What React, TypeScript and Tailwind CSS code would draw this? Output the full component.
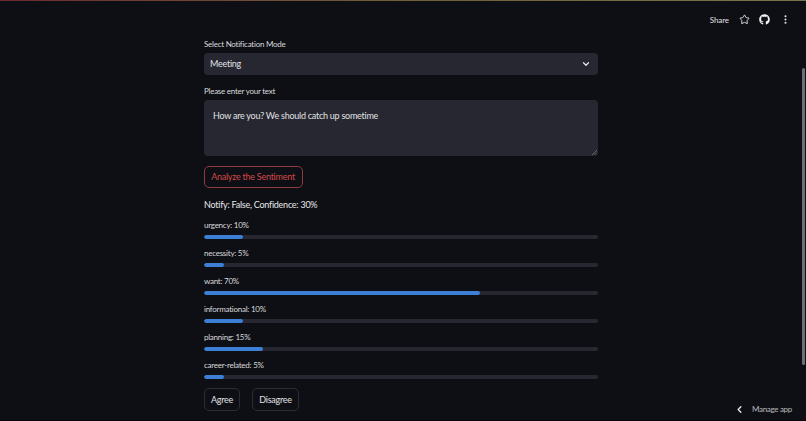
import { ChevronDown, ChevronLeft, EllipsisVertical, Star } from 'lucide-react';
import { FaGithub } from 'react-icons/fa';

const scores = [
  { label: 'urgency', value: 10 },
  { label: 'necessity', value: 5 },
  { label: 'want', value: 70 },
  { label: 'informational', value: 10 },
  { label: 'planning', value: 15 },
  { label: 'career-related', value: 5 },
];

const App = () => {
  return (
    <div className="relative h-[421px] w-[806px] overflow-hidden bg-[#0e0f14] font-['Lato',sans-serif] text-[#e6e7ea]">
      <div className="h-px bg-gradient-to-r from-[#6b2a30] via-[#6e5f3a] to-[#77744a]"></div>

      {/* Toolbar */}
      <div className="flex h-[36px] items-center justify-end pr-[15px] pt-[1px]">
        <span className="mr-[10px] text-[8px] font-medium tracking-[-0.1px] text-[#d8d9dc]">Share</span>
        <Star size={11} strokeWidth={2} className="mr-[9px] text-[#e6e7ea]" />
        <FaGithub size={11} className="mr-[10px] text-[#f0f0f2]" />
        <EllipsisVertical size={11} strokeWidth={2.5} className="text-[#e6e7ea]" />
      </div>

      <main className="ml-[204px] flex w-[394px] flex-col">
        <label className="h-[16px] text-[8px] leading-[14px] tracking-[-0.25px] text-[#d8d9dc]">Select Notification Mode</label>
        <div className="flex h-[22px] items-center justify-between rounded-[4px] bg-[#262730] pl-[6px] pr-[7px] text-[9px] tracking-[-0.25px] text-[#e0e1e4]">
          <span>Meeting</span>
          <ChevronDown size={10} strokeWidth={3} className="text-[#e6e7ea]" />
        </div>

        <label className="mt-[9px] h-[16px] text-[8px] leading-[14px] tracking-[-0.25px] text-[#d8d9dc]">Please enter your text</label>
        <div className="relative h-[56px] rounded-[4px] bg-[#262730] px-[9px] pt-[10px] text-[9px] leading-[12px] tracking-[-0.25px] text-[#e0e1e4]">
          How are you? We should catch up sometime
          <svg viewBox="0 0 6 6" className="absolute bottom-[1px] right-[1px] h-[5px] w-[5px] text-[#777]">
            <path d="M0 6 6 0M3 6 6 3" stroke="currentColor" strokeWidth="0.9" />
          </svg>
        </div>

        <button className="mt-[10px] h-[22px] w-[99px] rounded-[5px] border border-[#8e3a40] pr-[1px] text-[9px] tracking-[-0.25px] text-[#d1484a]">
          Analyze the Sentiment
        </button>

        <p className="mt-[10px] text-[9px] leading-[13px] tracking-[-0.25px] text-[#e6e7ea]">Notify: False, Confidence: 30%</p>

        <div className="mt-[10px] flex flex-col gap-[10px]">
          {scores.map((s) => (
            <div key={s.label} className="flex h-[18px] flex-col">
              <span className="h-[13.5px] text-[8px] leading-[9px] tracking-[-0.25px] text-[#d8d9dc]">
                {s.label}: {s.value}%
              </span>
              <div className="h-[4.5px] overflow-hidden rounded-full bg-[#262730]">
                <div className="h-full rounded-full bg-[#3d7fd4]" style={{ width: `${s.value}%` }}></div>
              </div>
            </div>
          ))}
        </div>

        <div className="mt-[9px] flex gap-[12px]">
          <button className="h-[23px] w-[36px] rounded-[5px] border border-[#2b2d36] text-[9px] tracking-[-0.25px] text-[#e0e1e4]">Agree</button>
          <button className="h-[23px] w-[47px] rounded-[5px] border border-[#2b2d36] text-[9px] tracking-[-0.25px] text-[#e0e1e4]">Disagree</button>
        </div>
      </main>

      {/* Overlays */}
      <div className="absolute right-[1px] top-[68px] h-[297px] w-[3px] rounded-full bg-[#6d6f76]"></div>
      <div className="absolute bottom-[6px] right-[14px] flex items-center gap-[7px] text-[8px] tracking-[-0.3px] text-[#b8b9bd]">
        <ChevronLeft size={11} strokeWidth={3} className="text-[#e6e7ea]" />
        <span>Manage app</span>
      </div>
      <div className="absolute bottom-0 left-0 h-px w-full bg-[#050608]"></div>
    </div>
  );
};

export default App;
